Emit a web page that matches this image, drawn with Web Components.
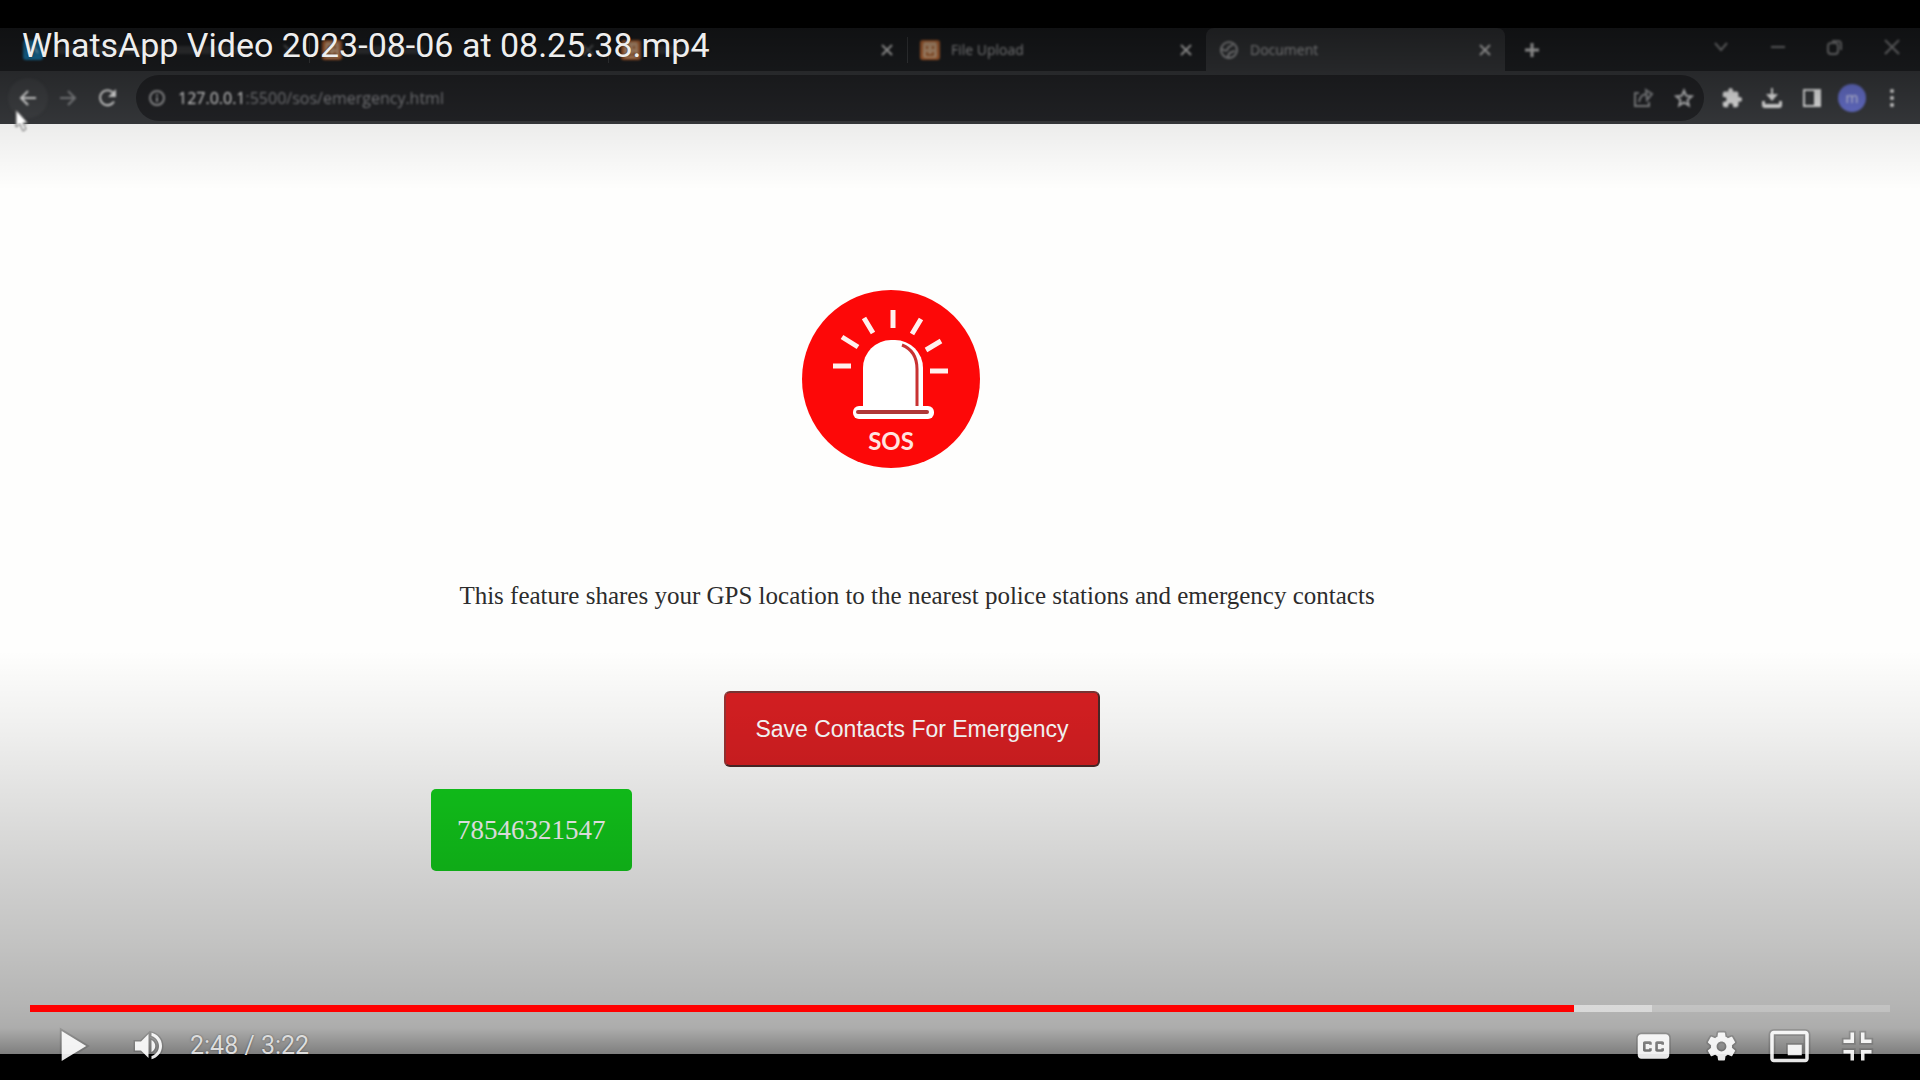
<!DOCTYPE html>
<html lang="en">
<head>
<meta charset="UTF-8">
<meta name="viewport" content="width=device-width, initial-scale=1.0">
<title>WhatsApp Video 2023-08-06 at 08.25.38.mp4</title>
<style>
    body {
        margin: 0;
        background: #000;
        font-family: Roboto, sans-serif;
    }
</style>
</head>
<body>
<video-player video-title="WhatsApp Video 2023-08-06 at 08.25.38.mp4">
    <browser-window>
        <browser-tab slot="tabs" icon="blue" masked="190"></browser-tab>
        <browser-tab slot="tabs" icon="orange" masked="70"></browser-tab>
        <browser-tab slot="tabs" icon="orange" masked="40"></browser-tab>
        <browser-tab slot="tabs" icon="orange">File Upload</browser-tab>
        <browser-tab slot="tabs" icon="globe" active>Document</browser-tab>
        <browser-toolbar slot="toolbar" url="127.0.0.1:5500/sos/emergency.html"></browser-toolbar>
        <emergency-page>
            <contact-card slot="contacts">78546321547</contact-card>
        </emergency-page>
    </browser-window>
    <player-controls slot="controls" current="2:48" duration="3:22" played="83" loaded="87.2"></player-controls>
</video-player>

<script>
class VideoPlayer extends HTMLElement {
    constructor() {
        super();
        this.attachShadow({ mode: 'open' });
    }

    connectedCallback() {
        this.shadowRoot.innerHTML = `
            <style>
                :host {
                    display: flex;
                    position: relative;
                    box-sizing: border-box;
                    min-height: 100vh;
                    padding: 28px 0 26px;
                    overflow: hidden;
                    background: #000;
                }

                .frame {
                    display: flex;
                    flex: 1;
                    min-width: 0;
                }

                .shade {
                    position: absolute;
                    inset: 0;
                    pointer-events: none;
                    background:
                        linear-gradient(to top, rgba(0, 0, 0, .50) 26px, rgba(0, 0, 0, .32) 52px,
                            rgba(0, 0, 0, .29) 75px, rgba(0, 0, 0, .23) 140px, rgba(0, 0, 0, .17) 220px,
                            rgba(0, 0, 0, .11) 290px, rgba(0, 0, 0, .05) 360px, transparent 430px),
                        linear-gradient(rgba(0, 0, 0, .6) 0, rgba(0, 0, 0, .35) 60px,
                            rgba(0, 0, 0, .07) 124px, transparent 190px);
                }

                h1 {
                    position: absolute;
                    top: 23px;
                    left: 22px;
                    margin: 0;
                    font-size: 34px;
                    font-weight: 400;
                    line-height: 44px;
                    white-space: nowrap;
                    color: #eee;
                    text-shadow: 0 0 2px rgba(0, 0, 0, .5);
                }

                .bottom {
                    position: absolute;
                    right: 0;
                    bottom: 0;
                    left: 0;
                }
            </style>
            <div class="frame"><slot></slot></div>
            <div class="shade"></div>
            <h1>${this.getAttribute('video-title')}</h1>
            <div class="bottom"><slot name="controls"></slot></div>
        `;
    }
}

class BrowserWindow extends HTMLElement {
    constructor() {
        super();
        this.attachShadow({ mode: 'open' });
    }

    connectedCallback() {
        this.shadowRoot.innerHTML = `
            <style>
                :host {
                    display: flex;
                    flex-direction: column;
                    flex: 1;
                    min-width: 0;
                    background: #fefefd;
                    font-family: "Open Sans", "Noto Sans", sans-serif;
                }

                .strip {
                    display: flex;
                    height: 43px;
                    padding-left: 10px;
                    background: #1f2124;
                }

                .strip button {
                    display: flex;
                    align-items: center;
                    justify-content: center;
                    width: 57px;
                    height: 38px;
                    padding: 0;
                    border: 0;
                    background: none;
                    color: #8c8d8f;
                    filter: blur(1px);
                }

                .strip .add {
                    width: 54px;
                    height: 43px;
                    color: #ddd;
                }

                .window {
                    display: flex;
                    margin-left: auto;
                }

                svg {
                    fill: none;
                    stroke: currentColor;
                    stroke-width: 2;
                }

                .add svg {
                    stroke-width: 3;
                }
            </style>
            <div class="strip">
                <slot name="tabs"></slot>
                <button class="add" aria-label="New tab">
                    <svg width="16" height="16" viewBox="0 0 16 16"><path d="M8 1v14M1 8h14"/></svg>
                </button>
                <div class="window">
                    <button aria-label="Search tabs">
                        <svg width="16" height="16" viewBox="0 0 16 16"><path d="M2 4l6 7 6-7"/></svg>
                    </button>
                    <button aria-label="Minimize">
                        <svg width="16" height="16" viewBox="0 0 16 16"><path d="M1 8h14"/></svg>
                    </button>
                    <button aria-label="Restore">
                        <svg width="16" height="16" viewBox="0 0 16 16"><rect x="1" y="4" width="10" height="11" rx="3"/><path d="M5 2h6a3 3 0 0 1 3 3v6"/></svg>
                    </button>
                    <button aria-label="Close window">
                        <svg width="16" height="16" viewBox="0 0 16 16"><path d="M1 1l14 14M15 1L1 15"/></svg>
                    </button>
                </div>
            </div>
            <slot name="toolbar"></slot>
            <slot></slot>
        `;
    }
}

class BrowserTab extends HTMLElement {
    constructor() {
        super();
        this.attachShadow({ mode: 'open' });
    }

    icon() {
        const icons = {
            blue: '<rect width="20" height="20" rx="3" fill="#1c84bb"/><path d="M5 13l5-7 5 7" stroke="#8cc8e8" stroke-width="2" fill="none"/>',
            orange: '<rect width="20" height="20" rx="3" fill="#d0733a"/><rect x="3" y="2" width="14" height="16" rx="2" fill="#edbd94"/><path d="M7 6v3M13 6v3M7 12v3h6v-3" stroke="#c4703a" stroke-width="2" fill="none"/>',
            globe: '<circle cx="10" cy="10" r="8" stroke="#a5a6a8" stroke-width="2" fill="none"/><path d="M3 9c4 3 6 1 6-1s4-1 5-4M9 17c0-4 3-5 7-6" stroke="#a5a6a8" stroke-width="2" fill="none"/>'
        };
        return icons[this.getAttribute('icon')];
    }

    connectedCallback() {
        const masked = this.getAttribute('masked');
        this.shadowRoot.innerHTML = `
            <style>
                :host {
                    display: flex;
                    align-items: center;
                    box-sizing: border-box;
                    flex: 0 1 299px;
                    min-width: 0;
                    height: 43px;
                    padding: 0 10px 0 13px;
                    color: #b4b5b7;
                    font-size: 14px;
                }

                :host([active]) {
                    border-radius: 8px 8px 0 0;
                    background: #36383b;
                }

                .icon, .label, button {
                    filter: blur(1px);
                }

                .icon {
                    flex: none;
                    width: 20px;
                    height: 20px;
                }

                .label {
                    flex: 1;
                    margin-left: 11px;
                    white-space: nowrap;
                    overflow: hidden;
                }

                .bar {
                    display: block;
                    height: 8px;
                    border-radius: 4px;
                    background: #3c3d3f;
                }

                button {
                    display: flex;
                    align-items: center;
                    justify-content: center;
                    width: 20px;
                    height: 24px;
                    padding: 0;
                    border: 0;
                    background: none;
                    color: #d6d6d6;
                }

                /* tabs lying under the video title are darkened by its shadow */
                :host([masked]:not([masked="40"])) button {
                    color: #66686a;
                }

                .divider {
                    width: 1px;
                    height: 26px;
                    margin: 0 -11px 0 10px;
                    background: #3f4144;
                }

                :host([active]) .divider, :host([icon="orange"]:not([masked])) .divider {
                    visibility: hidden;
                }
            </style>
            <svg class="icon" viewBox="0 0 20 20">${this.icon()}</svg>
            <span class="label">${masked ? `<span class="bar" style="width: ${masked}px"></span>` : '<slot></slot>'}</span>
            <button aria-label="Close tab">
                <svg width="12" height="12" viewBox="0 0 12 12" fill="none" stroke="currentColor" stroke-width="2"><path d="M1 1l10 10M11 1L1 11"/></svg>
            </button>
            <span class="divider"></span>
        `;
    }
}

class BrowserToolbar extends HTMLElement {
    constructor() {
        super();
        this.attachShadow({ mode: 'open' });
    }

    connectedCallback() {
        this.shadowRoot.innerHTML = `
            <style>
                :host {
                    display: flex;
                    align-items: center;
                    position: relative;
                    box-sizing: border-box;
                    height: 53px;
                    padding: 0 8px;
                    background: #37393c;
                }

                button {
                    display: flex;
                    align-items: center;
                    justify-content: center;
                    flex: none;
                    width: 40px;
                    height: 40px;
                    padding: 0;
                    border: 0;
                    border-radius: 20px;
                    background: none;
                    color: #e8e8e8;
                    filter: blur(1px);
                }

                .hover {
                    background: #3e4043;
                }

                .dim {
                    color: #85878a;
                }

                .star {
                    color: #bcbdbf;
                }

                .omnibox {
                    display: flex;
                    align-items: center;
                    flex: 1;
                    min-width: 0;
                    height: 46px;
                    margin: 0 8px;
                    padding-left: 12px;
                    border-radius: 23px;
                    background: #222326;
                }

                .info {
                    flex: none;
                    color: #9a9b9d;
                    filter: blur(1px);
                }

                input {
                    flex: 1;
                    min-width: 0;
                    margin: 0 0 0 12px;
                    padding: 0;
                    border: 0;
                    outline: 0;
                    font: 16px/24px "Open Sans", "Noto Sans", sans-serif;
                    color: #999;
                    background: linear-gradient(90deg, #fff 68px, #85868a 68px);
                    background-clip: text;
                    -webkit-background-clip: text;
                    -webkit-text-fill-color: transparent;
                    filter: blur(1px);
                }

                svg {
                    fill: none;
                    stroke: currentColor;
                    stroke-width: 2;
                }

                .solid {
                    fill: currentColor;
                    stroke: none;
                }

                .avatar span {
                    width: 28px;
                    border-radius: 14px;
                    background: #6872cf;
                    color: #d4d6ee;
                    font: 14px/28px "Open Sans", sans-serif;
                }

                .cursor {
                    position: absolute;
                    top: 38px;
                    left: 14px;
                    z-index: 1;
                    filter: blur(1px);
                }
            </style>
            <button class="hover" aria-label="Back">
                <svg width="18" height="18" viewBox="0 0 18 18"><path d="M17 9H2M9 2L2 9l7 7"/></svg>
            </button>
            <button class="dim" aria-label="Forward">
                <svg width="18" height="18" viewBox="0 0 18 18"><path d="M1 9h15M9 2l7 7-7 7"/></svg>
            </button>
            <button aria-label="Reload">
                <svg width="20" height="20" viewBox="0 0 20 20"><path d="M16 13.500a7.500 7.500 0 1 1-1-9"/><path d="M18 1v8h-8z" fill="currentColor" stroke="none"/></svg>
            </button>
            <div class="omnibox">
                <svg class="info" width="18" height="18" viewBox="0 0 18 18"><circle cx="9" cy="9" r="7"/><path d="M9 8v5M9 5v2"/></svg>
                <input type="text" aria-label="Address" value="${this.getAttribute('url')}">
                <button class="dim" aria-label="Share">
                    <svg width="22" height="22" viewBox="0 0 22 22"><path d="M6 6H2v13h14v-4M6 15c1-6 4-8 8-8M13 3l6 4-5 6z"/></svg>
                </button>
                <button class="star" aria-label="Bookmark">
                    <svg width="20" height="20" viewBox="0 0 20 20"><path d="M10 2.500l2.200 5.200 5.600.5-4.300 3.700 1.300 5.500-4.800-2.900-4.800 2.900 1.300-5.500-4.300-3.700 5.600-.5z"/></svg>
                </button>
            </div>
            <button aria-label="Extensions">
                <svg class="solid" width="22" height="22" viewBox="0 0 24 24"><path d="M20.500 11H19V7a2 2 0 0 0-2-2h-4V3.500a2.500 2.500 0 0 0-5 0V5H4a2 2 0 0 0-2 2v3.800h1.500a2.700 2.700 0 0 1 0 5.400H2V20a2 2 0 0 0 2 2h3.800v-1.500a2.700 2.700 0 0 1 5.400 0V22H17a2 2 0 0 0 2-2v-4h1.500a2.500 2.500 0 0 0 0-5z"/></svg>
            </button>
            <button aria-label="Downloads">
                <svg width="22" height="22" viewBox="0 0 22 22"><path d="M11 1v8"/><path d="M5 7h12l-6 7z" fill="currentColor" stroke="none"/><path d="M1 14h3v3h14v-3h3v4q0 3-3 3H4q-3 0-3-3z" fill="currentColor" stroke="none"/></svg>
            </button>
            <button aria-label="Side panel">
                <svg width="20" height="20" viewBox="0 0 20 20"><rect x="2" y="2" width="16" height="16"/><path d="M12 2h6v16h-6z" fill="currentColor" stroke="none"/></svg>
            </button>
            <button class="avatar" aria-label="Profile"><span>m</span></button>
            <button aria-label="Menu">
                <svg class="solid" width="6" height="20" viewBox="0 0 6 20"><circle cx="3" cy="3" r="2"/><circle cx="3" cy="10" r="2"/><circle cx="3" cy="17" r="2"/></svg>
            </button>
            <svg class="cursor" width="16" height="24" viewBox="0 0 16 24"><path d="M2 1v17l4-3 3 7 3-2-3-6h5z" fill="#fff" stroke="#555" stroke-width="1"/></svg>
        `;
    }
}

class EmergencyPage extends HTMLElement {
    constructor() {
        super();
        this.attachShadow({ mode: 'open' });
    }

    connectedCallback() {
        this.shadowRoot.innerHTML = `
            <style>
                :host {
                    display: flex;
                    flex-direction: column;
                    align-items: center;
                    flex: 1;
                    padding: 165px 86px 0 0;
                    font-family: "Liberation Serif", serif;
                    color: #2c2c2c;
                }

                .content {
                    display: flex;
                    flex-direction: column;
                    align-items: center;
                    width: 100%;
                    max-width: 972px;
                }

                .logo {
                    width: 180px;
                    height: 180px;
                    margin-right: 52px;
                }

                p {
                    margin: 112px 0 80px;
                    font-size: 25px;
                    line-height: 30px;
                }

                .save {
                    box-sizing: border-box;
                    height: 76px;
                    margin-right: 10px;
                    padding: 0 29px;
                    border: 2px solid;
                    border-color: #7c3434 #4c2828 #4c2828 #9c3434;
                    border-radius: 6px;
                    background: #d81f22;
                    color: #fff;
                    font: 23px/30px "Liberation Sans", sans-serif;
                }

                .contacts {
                    align-self: flex-start;
                    margin-top: 22px;
                }
            </style>
            <div class="content">
                <svg class="logo" viewBox="0 0 180 180" role="img" aria-label="SOS">
                    <circle cx="90" cy="90" r="89" fill="#fd0808"/>
                    <path d="M92 21v18M120 30l-9 15M140 52l-15 9M129 82h18M63 29l9 15M41 48l16 10M32 77h18" stroke="#fff0ee" stroke-width="5"/>
                    <path d="M62 118V79a28 28 0 0 1 28-28h4a28 28 0 0 1 28 28v39z" fill="#fff"/>
                    <path d="M116 117V80q0-18-15-24" fill="none" stroke="#c83232" stroke-width="3"/>
                    <rect x="52" y="117" width="81" height="13" rx="6" fill="#fff"/>
                    <path d="M57 123h69" stroke="#b03838" stroke-width="4" stroke-linecap="round"/>
                    <text x="90" y="161" text-anchor="middle" font-family="Lato, sans-serif" font-size="24" font-weight="700" fill="#ffe4e0">SOS</text>
                </svg>
                <p>This feature shares your GPS location to the nearest police stations and emergency contacts</p>
                <button class="save">Save Contacts For Emergency</button>
                <div class="contacts"><slot name="contacts"></slot></div>
            </div>
        `;
    }
}

class ContactCard extends HTMLElement {
    constructor() {
        super();
        this.attachShadow({ mode: 'open' });
    }

    connectedCallback() {
        this.shadowRoot.innerHTML = `
            <style>
                :host {
                    display: block;
                    padding: 26px;
                    border-radius: 5px;
                    background: #12cf1c;
                    color: #fff;
                    font-size: 27px;
                    line-height: 30px;
                }
            </style>
            <slot></slot>
        `;
    }
}

class PlayerControls extends HTMLElement {
    constructor() {
        super();
        this.attachShadow({ mode: 'open' });
    }

    // every glyph gets a soft dark outline under its fill
    glyph(d) {
        return `<svg viewBox="0 0 36 36"><path class="outline" d="${d}"/><path d="${d}"/></svg>`;
    }

    connectedCallback() {
        const played = this.getAttribute('played');
        const loaded = this.getAttribute('loaded');
        this.shadowRoot.innerHTML = `
            <style>
                :host {
                    display: block;
                    font-family: Roboto, sans-serif;
                    color: #ddd;
                }

                .seek {
                    padding: 0 30px;
                }

                input {
                    display: block;
                    appearance: none;
                    -webkit-appearance: none;
                    width: 100%;
                    height: 7px;
                    margin: 0;
                    background: linear-gradient(90deg, #f00 ${played}%, rgba(255, 255, 255, .5) ${played}%,
                        rgba(255, 255, 255, .5) ${loaded}%, rgba(255, 255, 255, .2) ${loaded}%);
                }

                input::-webkit-slider-thumb {
                    -webkit-appearance: none;
                    width: 0;
                    height: 7px;
                }

                .row {
                    display: flex;
                    align-items: center;
                    height: 68px;
                    padding: 0 31px 0 39px;
                }

                button {
                    flex: none;
                    width: 63px;
                    height: 63px;
                    padding: 0;
                    border: 0;
                    background: none;
                }

                .play {
                    width: 68px;
                    height: 68px;
                }

                .volume {
                    width: 54px;
                    height: 54px;
                    margin: 0 13px 0 16px;
                }

                .time {
                    font-size: 25px;
                    line-height: 30px;
                    text-shadow: 0 0 2px rgba(0, 0, 0, .5);
                }

                .right {
                    display: flex;
                    gap: 5px;
                    margin-left: auto;
                }

                svg {
                    display: block;
                    width: 100%;
                    height: 100%;
                    fill: #fff;
                    fill-rule: evenodd;
                    opacity: .9;
                }

                .outline {
                    fill: none;
                    stroke: #000;
                    stroke-opacity: .15;
                    stroke-width: 2;
                }
            </style>
            <div class="seek">
                <input type="range" min="0" max="100" value="${played}" aria-label="Seek">
            </div>
            <div class="row">
                <button class="play" aria-label="Play">${this.glyph('M12 26V10l13 8z')}</button>
                <button class="volume" aria-label="Mute">${this.glyph('M8 21h4l5 5V10l-5 5H8zM19 14v8c1.480-.68 2.500-2.230 2.500-4s-1.020-3.260-2.500-4zM19 11.290c2.890.86 5 3.540 5 6.710s-2.110 5.850-5 6.710v2.060c4.010-.91 7-4.490 7-8.770s-2.990-7.860-7-8.770z')}</button>
                <span class="time">${this.getAttribute('current')} / ${this.getAttribute('duration')}</span>
                <div class="right">
                    <button aria-label="Subtitles">${this.glyph('M11 11c-1.100 0-2 .9-2 2v10c0 1.100.9 2 2 2h14c1.100 0 2-.9 2-2V13c0-1.100-.9-2-2-2zM17 17h-1.500v-.5h-2v3h2V19H17v1c0 .55-.45 1-1 1h-3c-.55 0-1-.45-1-1v-4c0-.55.45-1 1-1h3c.55 0 1 .45 1 1zM24 17h-1.500v-.5h-2v3h2V19H24v1c0 .55-.45 1-1 1h-3c-.55 0-1-.45-1-1v-4c0-.55.45-1 1-1h3c.55 0 1 .45 1 1z')}</button>
                    <button aria-label="Settings">${this.glyph('m23.940 18.780c.03-.25.05-.51.05-.78 0-.27-.02-.52-.05-.78l1.680-1.320c.15-.12.19-.33.09-.51l-1.600-2.760c-.09-.17-.31-.24-.48-.17l-1.990.8c-.41-.32-.86-.58-1.350-.78l-.3-2.120c-.02-.19-.19-.33-.39-.33h-3.200c-.2 0-.36.14-.39.33l-.3 2.120c-.48.2-.93.47-1.350.78l-1.990-.8c-.18-.07-.39 0-.48.17l-1.600 2.760c-.1.17-.05.39.09.51l1.680 1.320c-.03.25-.05.52-.05.78 0 .26.02.52.05.78l-1.680 1.320c-.15.12-.19.33-.09.51l1.600 2.760c.09.17.31.24.48.17l1.990-.8c.41.32.86.58 1.350.78l.3 2.120c.02.19.19.33.39.33h3.200c.2 0 .36-.14.39-.33l.3-2.120c.48-.2.93-.47 1.350-.78l1.990.8c.18.07.39 0 .48-.17l1.600-2.760c.09-.17.05-.39-.09-.51zm-5.940 2.010c-1.540 0-2.800-1.250-2.800-2.800 0-1.540 1.250-2.800 2.800-2.800 1.540 0 2.800 1.250 2.800 2.800 0 1.540-1.250 2.800-2.800 2.800z')}</button>
                    <button aria-label="Miniplayer">${this.glyph('M25 17h-8v6h8zM29 25V11c0-1.100-.9-2-2-2H9c-1.100 0-2 .9-2 2v14c0 1.100.9 2 2 2h18c1.100 0 2-.9 2-2zM27 25H9V11h18z')}</button>
                    <button aria-label="Exit full screen">${this.glyph('M14 14h-4v2h6v-6h-2zM22 14v-4h-2v6h6v-2zM20 26h2v-4h4v-2h-6zM10 22h4v4h2v-6h-6z')}</button>
                </div>
            </div>
        `;
    }
}

customElements.define('video-player', VideoPlayer);
customElements.define('browser-window', BrowserWindow);
customElements.define('browser-tab', BrowserTab);
customElements.define('browser-toolbar', BrowserToolbar);
customElements.define('emergency-page', EmergencyPage);
customElements.define('contact-card', ContactCard);
customElements.define('player-controls', PlayerControls);
</script>
</body>
</html>
